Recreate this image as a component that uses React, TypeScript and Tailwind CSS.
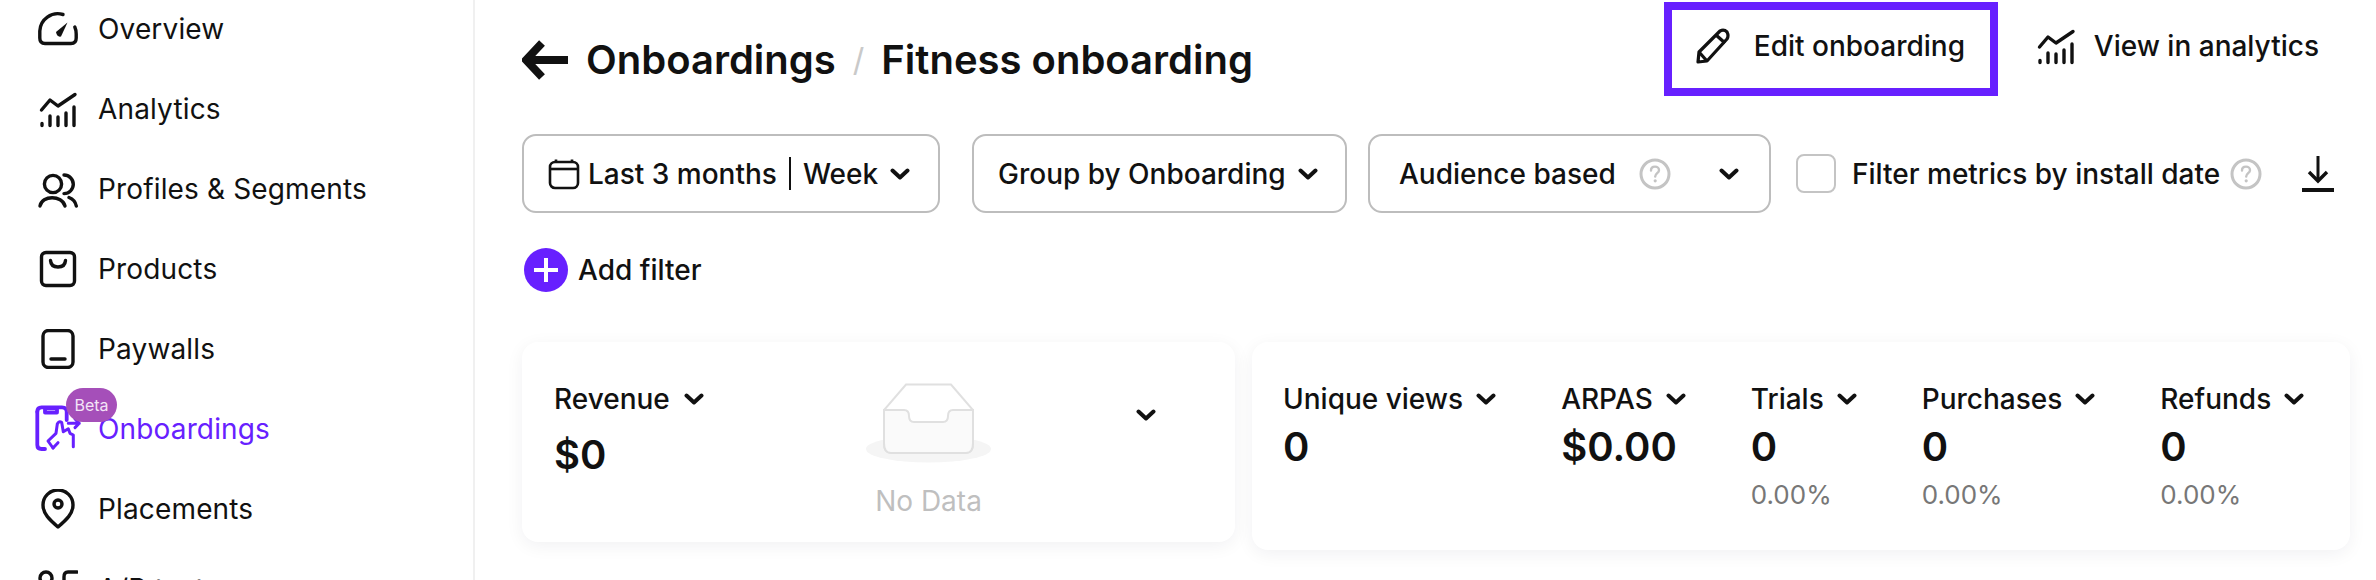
import React from "react";

const S = "fill-none stroke-current stroke-[3.4]";

function Chevron({ className = "" }: { className?: string }) {
  return (
    <svg viewBox="0 0 20 14" className={`w-[20px] h-[14px] shrink-0 ${className}`}>
      <path d="M2.5 3.5 L10 10.5 L17.5 3.5" fill="none" stroke="#111" strokeWidth="4" strokeLinecap="round" strokeLinejoin="round" />
    </svg>
  );
}

function Question() {
  return (
    <svg viewBox="0 0 32 32" className="w-[32px] h-[32px] shrink-0">
      <circle cx="16" cy="16" r="14" fill="none" stroke="#c4c4c4" strokeWidth="3" />
      <path d="M12 12.5 C12 9.8 14 8.6 16 8.6 C18.2 8.6 20 10 20 12.2 C20 15 16.2 15.4 16.2 18.6" fill="none" stroke="#c4c4c4" strokeWidth="2.4" strokeLinecap="round" />
      <circle cx="16.2" cy="22.8" r="1.6" fill="#c4c4c4" />
    </svg>
  );
}

function AnalyticsIcon() {
  return (
    <svg viewBox="0 0 40 40" className={`w-[40px] h-[40px] shrink-0 ${S}`} strokeLinecap="round" strokeLinejoin="round">
      <path d="M3.5 21 L12 11 L20 17 L37 5.5" />
      <path d="M4 34.5 V36.5 M12 27 V36.5 M20 28 V36.5 M28 24 V36.5 M36 18 V36.5" />
    </svg>
  );
}

const icons: Record<string, React.ReactNode> = {
  Overview: (
    <svg viewBox="0 0 40 40" className={`w-[40px] h-[40px] shrink-0 ${S}`} strokeLinecap="round" strokeLinejoin="round">
      <path d="M25 5.5 A18 18 0 0 0 1.8 22 V29 Q1.8 34.5 7 34.5 H33 Q38.2 34.5 38.2 29 V25 Q38.2 21 36.8 18" />
      <path d="M18 23 L29.5 13.5 L23 27.5 Q19 28.5 18 23 Z" fill="currentColor" stroke="none" />
    </svg>
  ),
  Analytics: <AnalyticsIcon />,
  "Profiles & Segments": (
    <svg viewBox="0 0 40 40" className={`w-[40px] h-[40px] shrink-0 ${S}`} strokeLinecap="round" strokeLinejoin="round">
      <circle cx="15" cy="15" r="8.6" />
      <path d="M26 6 A9 9 0 0 1 26 24.6" />
      <path d="M2 37 C4 26 24 26 27 37" />
      <path d="M31 28.5 C35 30 37.5 33 38.3 37" />
    </svg>
  ),
  Products: (
    <svg viewBox="0 0 40 40" className={`w-[40px] h-[40px] shrink-0 ${S}`} strokeLinecap="round" strokeLinejoin="round">
      <rect x="3.5" y="3.5" width="33" height="33" rx="4.5" />
      <path d="M12.5 11.5 Q13 18 20 18 Q27 18 27.5 11.5" />
    </svg>
  ),
  Paywalls: (
    <svg viewBox="0 0 40 40" className={`w-[40px] h-[40px] shrink-0 ${S}`} strokeLinecap="round" strokeLinejoin="round">
      <rect x="5" y="1.5" width="30" height="37" rx="5.5" />
      <path d="M13 30 H27" />
    </svg>
  ),
  Onboardings: (
    <svg viewBox="0 0 40 40" className="w-[40px] h-[40px] shrink-0 overflow-visible fill-none stroke-current stroke-[3.8]" strokeLinecap="round" strokeLinejoin="round">
      <path d="M-0.7 2.7 V36 Q-0.7 40 3.5 40 H7" />
      <path d="M-0.7 2.7 Q-0.7 -1.7 3.5 -1.7 H24 Q28.7 -1.7 28.7 2.7 V11" />
      <path d="M7 -1 H19 V3.5 H7 Z" />
      <path d="M15 39 L10 32 L18 24.3 L19.3 15 Q21 11.5 23.7 13.5 L25.3 22.7 L30.3 19.8 L32 24.3 L35.3 26 V37.7" strokeWidth="3" />
      <path d="M15 39 L20 33.7" strokeWidth="3" />
      <path d="M30.3 14.3 H41.3 M37 10 L41.3 14.3 L37 18.6" strokeWidth="3" />
    </svg>
  ),
  Placements: (
    <svg viewBox="0 0 40 40" className={`w-[40px] h-[40px] shrink-0 ${S}`} strokeLinecap="round" strokeLinejoin="round">
      <path d="M20 38 C12 31 5 25 5 16 A15 15 0 0 1 35 16 C35 25 28 31 20 38 Z" />
      <circle cx="20" cy="15" r="4" />
    </svg>
  ),
  "A/B tests": (
    <svg viewBox="0 0 40 40" className={`w-[40px] h-[40px] shrink-0 ${S}`} strokeLinecap="round" strokeLinejoin="round">
      <circle cx="8" cy="9" r="6" />
      <path d="M39 3 H30 Q26 3 26 8 V25 Q26 31 20 31 H14" />
      <circle cx="8" cy="32" r="6" />
    </svg>
  ),
};

const nav = ["Overview", "Analytics", "Profiles & Segments", "Products", "Paywalls", "Onboardings", "Placements", "A/B tests"];

function Metric({ label, value, pct }: { label: string; value: string; pct?: string }) {
  return (
    <div className="flex flex-col items-start">
      <div className="flex items-center gap-[13px] h-[40px] text-[28px] font-medium leading-[40px]">
        {label}
        <Chevron />
      </div>
      <div className="mt-[4px] h-[48px] text-[40px] leading-[48px] font-semibold">{value}</div>
      {pct && <div className="mt-[6px] h-[36px] text-[26px] leading-[36px] text-[#777777]">{pct}</div>}
    </div>
  );
}

export default function App() {
  return (
    <div className="flex h-[580px] overflow-hidden bg-white text-[#111111] font-[Inter,sans-serif]">
      <aside className="w-[475px] shrink-0 border-r-[2px] border-[#f0f0f0] pl-[38px] pt-[9px] flex flex-col gap-[40px]">
        {nav.map((n) => {
          const active = n === "Onboardings";
          return (
            <div key={n} className={`relative flex items-center gap-[20px] h-[40px] shrink-0 text-[28px] leading-[40px] tracking-[0.15px] ${active ? "text-[#6720ff]" : ""}`}>
              {icons[n]}
              <span>{n}</span>
              {active && (
                <span className="absolute left-[28px] -top-[21px] w-[51px] h-[34px] rounded-full bg-[#a54fb9] text-[#f3e3f7] text-[16px] leading-[34px] text-center tracking-normal">
                  Beta
                </span>
              )}
            </div>
          );
        })}
      </aside>

      <main className="flex-1 min-w-0 pl-[47px] pr-[26px]">
        <div className="flex items-start justify-between h-[132px]">
          <div className="flex items-center h-[60px] mt-[30px] text-[40px] leading-[60px] font-semibold">
            <svg viewBox="0 0 46 40" className="w-[46px] h-[40px] mr-[18px]">
              <path d="M20 3 L4 20 L20 37" fill="none" stroke="#111" strokeWidth="8" />
              <path d="M6 20 H46" stroke="#111" strokeWidth="8" />
            </svg>
            <span>Onboardings</span>
            <span className="mx-[17px] text-[#c9c9c9] font-normal text-[32px]">/</span>
            <span>Fitness onboarding</span>
          </div>
          <div className="flex items-start mt-[2px] mr-[31px]">
            <div className="flex items-center gap-[24px] w-[334px] h-[94px] border-[8px] border-[#6720ff] pl-[24px] pb-[6px] text-[28px] font-medium">
              <svg viewBox="0 0 34 36" className="w-[34px] h-[36px] shrink-0" fill="none" stroke="#111" strokeWidth="3.2" strokeLinejoin="round">
                <path d="M24 3 Q28 1 31 4 Q33 8 31 11 L11 33 L2 34 L3 24 Z" />
                <path d="M20 7 L29 15" />
                <path d="M3 24 L11 33" />
              </svg>
              <span>Edit onboarding</span>
            </div>
            <div className="flex items-center gap-[18px] ml-[38px] h-[88px] text-[28px] font-medium">
              <AnalyticsIcon />
              <span>View in analytics</span>
            </div>
          </div>
        </div>

        <div className="flex items-center mt-[2px] h-[79px] text-[28px] font-medium">
          <div className="flex items-center w-[418px] h-[79px] border-[2px] border-[#bdbdbd] rounded-[14px] pl-[24px] shrink-0">
            <svg viewBox="0 0 32 32" className="w-[32px] h-[32px] shrink-0" fill="none" stroke="#111" strokeWidth="2.6">
              <rect x="2" y="4" width="28" height="26" rx="5" />
              <path d="M2 11 H30" />
              <path d="M8 1.5 V4 M24 1.5 V4" />
            </svg>
            <span className="ml-[8px]">Last 3 months</span>
            <span className="mx-[12px] w-[2px] h-[33px] bg-[#111111]" />
            <span>Week</span>
            <Chevron className="ml-[12px]" />
          </div>
          <div className="flex items-center w-[375px] h-[79px] ml-[32px] border-[2px] border-[#bdbdbd] rounded-[14px] pl-[24px] shrink-0">
            <span>Group by Onboarding</span>
            <Chevron className="ml-[12px]" />
          </div>
          <div className="flex items-center w-[403px] h-[79px] ml-[21px] border-[2px] border-[#bdbdbd] rounded-[14px] pl-[29px] shrink-0">
            <span>Audience based</span>
            <span className="ml-[23px]"><Question /></span>
            <Chevron className="ml-[48px]" />
          </div>
          <div className="w-[40px] h-[39px] ml-[25px] border-[2px] border-[#c4c4c4] rounded-[8px] shrink-0" />
          <span className="ml-[16px] whitespace-nowrap">Filter metrics by install date</span>
          <span className="ml-[10px]"><Question /></span>
          <svg viewBox="0 0 34 38" className="w-[34px] h-[38px] ml-[39px] shrink-0" fill="none" stroke="#111">
            <path d="M17 1 V24" strokeWidth="3" />
            <path d="M8 17 L17 26 L26 17" strokeWidth="3.4" />
            <path d="M1 35 H33" strokeWidth="4" />
          </svg>
        </div>

        <div className="flex items-center gap-[10px] mt-[35px] h-[44px] text-[28px] font-medium">
          <svg viewBox="0 0 44 44" className="w-[44px] h-[44px] ml-[2px]">
            <circle cx="22" cy="22" r="22" fill="#6720ff" />
            <path d="M22 10 V34 M10 22 H34" stroke="#fff" strokeWidth="4" />
          </svg>
          <span>Add filter</span>
        </div>

        <div className="flex items-start gap-[17px] mt-[50px]">
          <div className="relative flex w-[713px] h-[200px] rounded-[16px] bg-white shadow-[0_4px_18px_rgba(20,20,50,0.06)] pl-[32px] pt-[37px] shrink-0">
            <div className="flex flex-col">
              <div className="flex items-center gap-[14px] h-[40px] text-[28px] font-medium leading-[40px]">
                Revenue
                <Chevron />
              </div>
              <div className="mt-[12px] text-[40px] leading-[48px] font-semibold">$0</div>
            </div>
            <div className="absolute left-[344px] top-[41px] flex flex-col items-center w-[125px]">
              <svg viewBox="0 0 125 80" className="w-[125px] h-[80px]">
                <ellipse cx="62.5" cy="66" rx="62.5" ry="13.5" fill="#f5f5f5" />
                <path d="M40 1.5 H85 L107 27 V60 Q107 70 100 70 H25 Q18 70 18 60 V27 Z" fill="#fff" stroke="#e0e0e0" strokeWidth="2" />
                <path d="M18 27 H38 Q43 27 43 33 Q43 39 48 39 H77 Q82 39 82 33 Q82 27 87 27 H107 V60 Q107 70 100 70 H25 Q18 70 18 60 Z" fill="#fafafa" stroke="#e0e0e0" strokeWidth="2" />
              </svg>
              <div className="mt-[20px] text-[28px] leading-[36px] text-[#bfbfbf]">No Data</div>
            </div>
            <Chevron className="absolute left-[614px] top-[66px]" />
          </div>

          <div className="flex gap-[65px] flex-1 min-w-0 h-[208px] rounded-[16px] bg-white shadow-[0_4px_18px_rgba(20,20,50,0.06)] pl-[31px] pt-[37px]">
            <Metric label="Unique views" value="0" />
            <Metric label="ARPAS" value="$0.00" />
            <Metric label="Trials" value="0" pct="0.00%" />
            <Metric label="Purchases" value="0" pct="0.00%" />
            <Metric label="Refunds" value="0" pct="0.00%" />
          </div>
        </div>
      </main>
    </div>
  );
}
